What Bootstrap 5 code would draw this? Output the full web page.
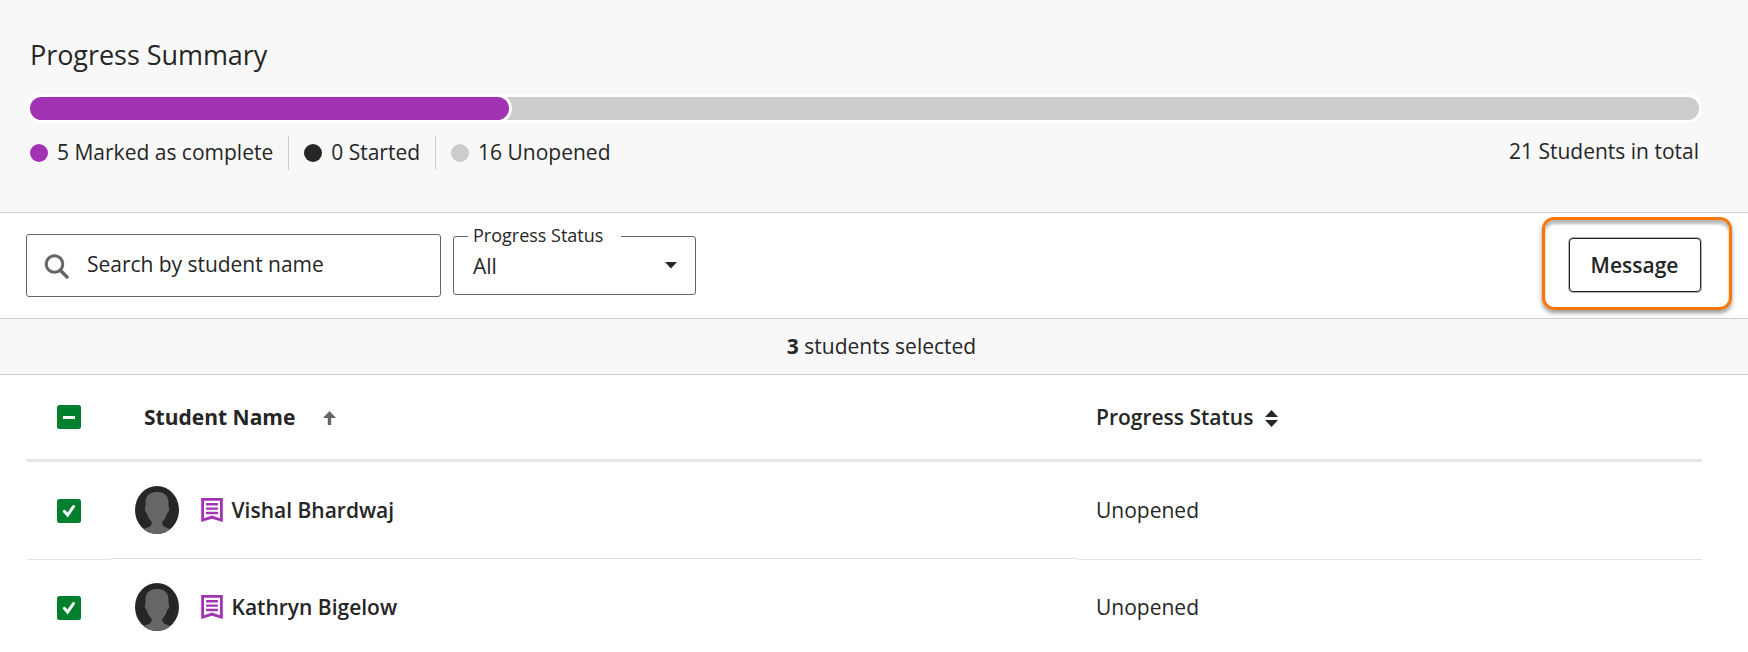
<!DOCTYPE html>
<html lang="en">
<head>
<meta charset="utf-8">
<title>Progress Summary</title>
<link href="https://cdn.jsdelivr.net/npm/bootstrap@5.3.0/dist/css/bootstrap.min.css" rel="stylesheet">
<style>
body{font-family:"Open Sans","Noto Sans",sans-serif;color:#262626;font-size:21px;line-height:30px;overflow:hidden;background:#fff;height:652px}
.summary{height:213px;background:#f8f8f8;border-bottom:1px solid #ccc;padding:37px 46px 0 27px}
.summary h1{font-size:27px;line-height:36px;font-weight:400;margin:0 0 21px 3px;letter-spacing:-.05px}
.track{height:29px;border:3px solid #fff;border-radius:15px;background:#ccc;overflow:visible}
.track .progress-bar{background:#a333b5;border-radius:12px;box-shadow:0 0 0 3px #fff;height:23px}
.legend-row{padding:13px 3px 0}
.key{height:34px;padding-right:15px;margin-right:15px;border-right:1px solid #ccc}
.key span:last-child{margin-bottom:2px}
.key:last-child{border:0}
.dot{width:18px;height:18px;border-radius:50%;margin-right:9px}
.toolbar{height:106px;border-bottom:1px solid #ccc;padding:0 16px 0 26px}
.search{width:415px;height:63px;border:1px solid #666;border-radius:3px;margin:21px 12px 0 0;padding-left:17px}
.search svg{margin-top:1px}
.ph{margin:0 0 3px 17px;letter-spacing:-.03px}
.status{width:243px;height:59px;border:1px solid #666;border-radius:3px;margin-top:23px;padding:0 18px 0 19px;position:relative}
.status label{position:absolute;left:14px;top:-16px;width:153px;padding-left:5px;background:#fff;font-size:18px;line-height:28px}
.callout-box{width:190px;height:93px;border:3px solid #fa7608;border-radius:12px;margin-top:4px;padding:18px 0 0 24px;box-shadow:0 3px 4px rgba(0,0,0,.4),inset 0 4px 3px rgba(0,0,0,.28)}
.btn-msg{width:132px;height:54px;border:1px solid #262626;border-radius:4px;box-shadow:0 0 0 1px rgba(38,38,38,.35);padding:0 1px 0 0;font:600 21px/50px "Open Sans","Noto Sans",sans-serif;color:#262626;background:#fff;display:block}
.strip{height:56px;background:#f8f8f8;border-bottom:1px solid #ccc;line-height:54px;padding-left:15px}
.strip b,.h-name{font-weight:700}
.grid{margin:0 46px 0 27px}
.line{display:flex;height:98px}
.line>div{display:flex;align-items:center}
.c1{width:84px;padding-left:30px}
.c2{width:967px}
.c3{width:624px;padding-left:18px}
.heads{height:87px;border-bottom:3px solid #e4e4e4}
.rowline>div{border-bottom:1px solid #e3e3e3}
.rowline .c2{height:97px}
.rowline .c3{padding-bottom:1px}
.rowline+.rowline{margin-top:-1px}
.rowline+.rowline>div{border-bottom-color:transparent}
.h-name{margin:0 28px 0 33px}
.asc{margin-top:2px}
.both{margin:2px 0 0 12px}
.who{padding-left:24px}
.rib{margin:0 8.500px 0 22px}
svg{flex:none;display:block}
</style>
</head>
<body>
<section class="summary">
  <h1>Progress Summary</h1>
  <div class="progress track"><div class="progress-bar" style="width:28.7%"></div></div>
  <div class="legend-row d-flex justify-content-between">
    <div class="d-flex">
      <div class="key d-flex align-items-center"><span class="dot" style="background:#a333b5"></span><span>5 Marked as complete</span></div>
      <div class="key d-flex align-items-center"><span class="dot" style="background:#262626"></span><span>0 Started</span></div>
      <div class="key d-flex align-items-center"><span class="dot" style="background:#ccc"></span><span>16 Unopened</span></div>
    </div>
    <span>21 Students in total</span>
  </div>
</section>
<section class="toolbar d-flex">
  <div class="search d-flex align-items-center">
    <svg width="26" height="26" viewBox="0 0 26 26" fill="none" stroke="#666"><circle cx="10.5" cy="11" r="8.3" stroke-width="3"/><path d="M16.500 17.500 23 24" stroke-width="3.400" stroke-linecap="round"/></svg>
    <span class="ph">Search by student name</span>
  </div>
  <div class="status d-flex align-items-center justify-content-between">
    <label>Progress Status</label><span>All</span>
    <svg width="12" height="7" viewBox="0 0 12 7"><path d="M0 0h12L6 6.500z" fill="#262626"/></svg>
  </div>
  <div class="callout-box ms-auto"><button class="btn btn-msg">Message</button></div>
</section>
<section class="strip text-center"><b>3</b> students selected</section>
<svg width="0" height="0" class="position-absolute">
  <symbol id="check" viewBox="0 0 24 24"><rect width="24" height="24" rx="2.500" fill="#00802d"/><path d="M7.300 12.300 10.600 16 16.500 7.500" fill="none" stroke="#fff" stroke-width="3" stroke-linecap="round"/></symbol>
  <symbol id="avatar" viewBox="0 0 44 48"><clipPath id="oval"><ellipse cx="22" cy="24" rx="22" ry="24"/></clipPath><g clip-path="url(#oval)"><path fill="#262626" d="M0 0h44v48H0z"/><path fill="#666" d="M22 6c8 0 11.500 4 11.500 11v4c1.200.2.900 5-1.200 6-1 4-3 6.500-4.800 8.500-.8 4.500 1.500 5.500 9.500 8V50H7v-6.500c8-2.500 10.300-3.500 9.500-8-1.800-2-3.800-4.500-4.800-8.500-2.100-1-2.400-5.800-1.200-6v-4C10.500 10 14 6 22 6z"/></g></symbol>
  <symbol id="ribbon" viewBox="0 0 22 24"><path fill="#a333b5" fill-rule="evenodd" d="M.8 0h20.400q.6 0 .6.600V24L11 20.800.2 24V.6Q.2 0 .8 0zM3 2.700v17.500l8-2.700 8 2.700V2.700z"/><path d="M6 6.200h10M6 10.600h10M6 15h10" stroke="#a333b5" stroke-width="2.400" stroke-linecap="round"/></symbol>
</svg>
<section class="grid">
  <div class="line heads fw-semibold">
    <div class="c1"><svg width="24" height="24"><rect width="24" height="24" rx="2.500" fill="#00802d"/><path d="M6 11h12v3H6z" fill="#fff"/></svg></div>
    <div class="c2"><span class="h-name">Student Name</span><svg class="asc" width="13" height="14" viewBox="0 0 13 14"><path d="M6.500 0 13 7H8.200v7H4.800V7H0z" fill="#666"/></svg></div>
    <div class="c3"><span>Progress Status</span><svg class="both" width="13" height="17" viewBox="0 0 13 17"><path d="M6.500 0 13 7H0zM0 10h13l-6.500 7z" fill="#262626"/></svg></div>
  </div>
  <div class="line rowline">
    <div class="c1"><svg width="24" height="24"><use href="#check"/></svg></div>
    <div class="c2 who"><svg width="44" height="48"><use href="#avatar"/></svg><svg class="rib" width="22" height="24"><use href="#ribbon"/></svg><span class="fw-semibold">Vishal Bhardwaj</span></div>
    <div class="c3">Unopened</div>
  </div>
  <div class="line rowline">
    <div class="c1"><svg width="24" height="24"><use href="#check"/></svg></div>
    <div class="c2 who"><svg width="44" height="48"><use href="#avatar"/></svg><svg class="rib" width="22" height="24"><use href="#ribbon"/></svg><span class="fw-semibold">Kathryn Bigelow</span></div>
    <div class="c3">Unopened</div>
  </div>
</section>
<script src="https://cdn.jsdelivr.net/npm/bootstrap@5.3.0/dist/js/bootstrap.bundle.min.js"></script>
</body>
</html>
